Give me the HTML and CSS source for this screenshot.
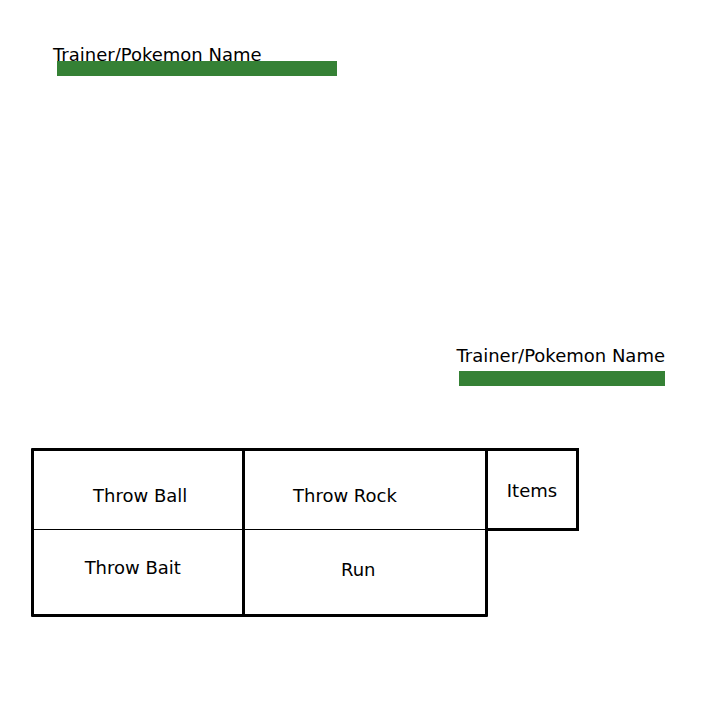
FILE: index.html
```html
<!DOCTYPE html>
<html lang="en">
<head>
<meta charset="utf-8">
<meta name="viewport" content="width=device-width, initial-scale=1">
<title>Battle</title>
<link rel="stylesheet" href="styles.css">
</head>
<body>
<main class="battle">
  <section class="fighter opponent">
    <h2 class="name" id="opponent-name">Trainer/Pokemon Name</h2>
    <div class="health" role="meter" aria-labelledby="opponent-name" aria-valuemin="0" aria-valuemax="100" aria-valuenow="100"></div>
  </section>
  <section class="fighter player">
    <h2 class="name" id="player-name">Trainer/Pokemon Name</h2>
    <div class="health" role="meter" aria-labelledby="player-name" aria-valuemin="0" aria-valuemax="100" aria-valuenow="100"></div>
  </section>
  <nav class="actions">
    <div class="moves">
      <button class="move ball" type="button">Throw Ball</button>
      <button class="move rock" type="button">Throw Rock</button>
      <button class="move bait" type="button">Throw Bait</button>
      <button class="move run" type="button">Run</button>
    </div>
    <button class="items" type="button">Items</button>
  </nav>
</main>
</body>
</html>
```
FILE: styles.css
```css
* {
  box-sizing: border-box;
}

body {
  margin: 0;
  background: #fff;
  color: #000;
  font: 18px/22px "DejaVu Sans", sans-serif;
}

.battle {
  display: flex;
  flex-direction: column;
  padding: 44px 55px 103px 31px;
}

.name {
  margin: 0;
  font-size: 18px;
  font-weight: 400;
  white-space: nowrap;
}

.health {
  height: 15px;
  background: #358135;
}

.opponent {
  width: 45%;
  min-width: 306px;
  padding-left: 22px;
}

/* The opponent's bar overlaps the foot of its name. */
.opponent .health {
  position: relative;
  width: 280px;
  margin: -5px 0 0 4px;
}

.player {
  align-self: flex-end;
  margin-top: 269px;
}

.player .health {
  width: 206px;
  margin: 4px 0 0 auto;
}

.actions {
  display: flex;
  align-items: flex-start;
  margin: 62px 86px 0 0;
}

.moves {
  flex: 1;
  display: grid;
  grid-template-columns: 211fr 240fr;
  grid-template-rows: minmax(79px, auto) minmax(84px, auto);
  border: 3px solid #000;
  border-radius: 1px;
}

button {
  margin: 0;
  background: none;
  border: 0 solid #000;
  border-radius: 0;
  color: inherit;
  font: inherit;
  cursor: pointer;
}

.move {
  padding: 0;
  text-align: left;
}

.ball,
.rock {
  padding-top: 12px;
  border-bottom-width: 1px;
}

.bait {
  padding-bottom: 8px;
}

.run {
  padding-bottom: 4px;
}

.ball,
.bait {
  border-right-width: 3px;
}

.ball {
  padding-left: 28%;
}

.bait {
  padding-left: 24%;
}

.rock {
  padding-left: 20%;
}

.run {
  padding-left: 40%;
}

.items {
  width: 94px;
  height: 83px;
  margin-left: -3px;
  padding: 2px 0 0;
  border-width: 3px;
}
```
